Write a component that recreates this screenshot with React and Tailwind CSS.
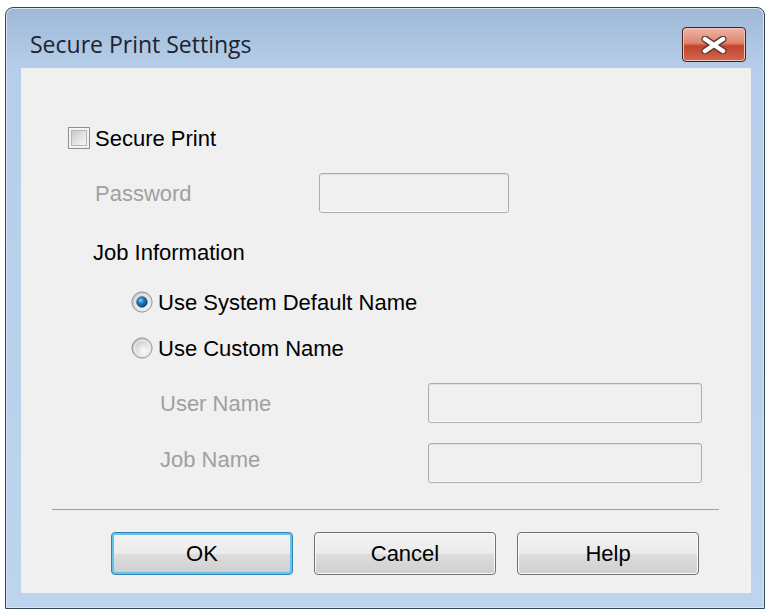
import React from "react";

const body = "font-['Liberation_Sans',Arial,sans-serif] text-[22px]";

function CloseButton() {
  return (
    <div className="w-[64px] h-[35px] rounded-[4px] border border-[#40221f] bg-[linear-gradient(to_bottom,#eeb4a6_0%,#df8670_45%,#c4432b_55%,#cf6a4f_100%)] shadow-[inset_0_0_0_1px_#f2c3b6] flex items-center justify-center">
      <svg width="28" height="18" viewBox="0 0 28 18">
        <path d="M5 3 L23 15 M23 3 L5 15" stroke="#5b3a36" strokeWidth="7" strokeLinecap="round" fill="none" />
        <path d="M5 3 L23 15 M23 3 L5 15" stroke="#ffffff" strokeWidth="4.5" strokeLinecap="round" fill="none" />
      </svg>
    </div>
  );
}

function Checkbox() {
  return (
    <div className="w-[22px] h-[22px] border border-[#8e8f8f] bg-[#f4f4f4] p-[2px]">
      <div className="w-full h-full border border-[#b4b6b9] bg-[linear-gradient(135deg,#c4c8cd_0%,#e4e5e7_55%,#f6f6f6_100%)]" />
    </div>
  );
}

function Radio({ checked }) {
  const id = checked ? "on" : "off";
  return (
    <svg width="22" height="22" viewBox="0 0 25 25">
      <defs>
        <linearGradient id={`ring-${id}`} x1="0" y1="0" x2="1" y2="1">
          <stop offset="0" stopColor="#b9b9b9" />
          <stop offset="1" stopColor="#f4f4f4" />
        </linearGradient>
        <radialGradient id={`dot-${id}`} cx="0.38" cy="0.35" r="0.7">
          <stop offset="0" stopColor="#7fd3fb" />
          <stop offset="0.45" stopColor="#1e78c0" />
          <stop offset="1" stopColor="#0c3f78" />
        </radialGradient>
        <radialGradient id={`in-${id}`} cx="0.65" cy="0.7" r="0.75">
          <stop offset="0" stopColor="#fbfbfb" />
          <stop offset="1" stopColor="#cfcfcf" />
        </radialGradient>
      </defs>
      <circle cx="12.5" cy="12.5" r="11.5" fill={`url(#ring-${id})`} stroke="#8c8c8c" strokeWidth="1" />
      <circle cx="12.5" cy="12.5" r="8.5" fill={`url(#in-${id})`} stroke="#f7f7f7" strokeWidth="1" />
      {checked && <circle cx="12.5" cy="12.5" r="6" fill={`url(#dot-${id})`} stroke="#164f87" strokeWidth="0.8" />}
    </svg>
  );
}

function TextBox({ w }) {
  return (
    <div
      className={`${w} h-[40px] rounded-[3px] border border-[#acacac] bg-[#f0f0f0] shadow-[inset_0_-1px_0_#fbfbfb,inset_0_1px_0_#e0e0e0]`}
    />
  );
}

function Button({ label, focused }) {
  return (
    <div
      className={`w-[182px] h-[43px] rounded-[4px] border flex items-center justify-center text-black ${body} bg-[linear-gradient(to_bottom,#f2f2f2_0%,#ebebeb_50%,#dddddd_50%,#cfcfcf_100%)] ${
        focused
          ? "border-[#3c7fb1] shadow-[inset_0_0_0_2px_#62c3ee]"
          : "border-[#707070] shadow-[inset_0_0_0_1px_#fbfbfb]"
      }`}
    >
      {label}
    </div>
  );
}

export default function App() {
  return (
    <div className="w-[768px] h-[609px] bg-white overflow-hidden pl-[5px] pt-[7px]">
      <div className="w-[760px] h-[602px] flex flex-col border border-[#37475a] rounded-t-[8px] bg-[linear-gradient(to_bottom,#9eb8d7_0px,#b6cee9_60px,#bcd4ee_100%)] shadow-[inset_0_0_0_1px_#d6e4f3]">
        <div className="h-[60px] flex items-start justify-between pt-[19px] pl-[24px] pr-[18px]">
          <span className="font-['Open_Sans',sans-serif] text-[23px] leading-[35px] text-[#1b2330]">
            Secure Print Settings
          </span>
          <CloseButton />
        </div>

        <div className={`ml-[15px] w-[730px] h-[525px] bg-[#f0f0f0] flex flex-col ${body} text-black`}>
          <div className="mt-[59px] ml-[47px] h-[22px] flex items-center gap-[5px]">
            <Checkbox />
            <span>Secure Print</span>
          </div>

          <div className="mt-[24px] ml-[74px] h-[40px] flex items-center">
            <span className="w-[224px] text-[#a0a0a0]">Password</span>
            <TextBox w="w-[190px]" />
          </div>

          <div className="mt-[28px] ml-[72px] leading-[24px]">Job Information</div>

          <div className="mt-[26px] ml-[110px] h-[22px] flex items-center gap-[5px]">
            <Radio checked />
            <span>Use System Default Name</span>
          </div>

          <div className="mt-[24px] ml-[110px] h-[22px] flex items-center gap-[5px]">
            <Radio />
            <span>Use Custom Name</span>
          </div>

          <div className="mt-[24px] ml-[139px] h-[40px] flex items-center">
            <span className="w-[268px] text-[#a0a0a0]">User Name</span>
            <TextBox w="w-[274px]" />
          </div>

          <div className="mt-[20px] ml-[139px] h-[40px] flex items-center">
            <span className="w-[268px] pb-[8px] text-[#a0a0a0]">Job Name</span>
            <TextBox w="w-[274px]" />
          </div>

          <div className="mt-[26px] ml-[31px] w-[667px] h-px bg-[#a0a0a0]" />

          <div className="mt-[22px] ml-[90px] flex gap-[21px]">
            <Button label="OK" focused />
            <Button label="Cancel" />
            <Button label="Help" />
          </div>
        </div>
      </div>
    </div>
  );
}
